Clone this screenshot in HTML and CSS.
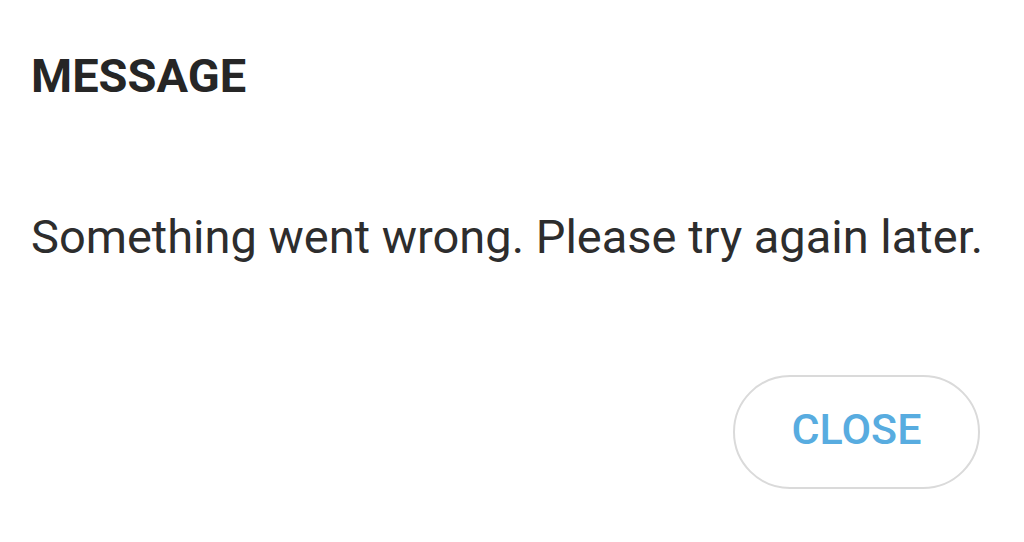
FILE: index.html
```html
<!DOCTYPE html>
<html>
<head>
<meta charset="utf-8">
<link rel="stylesheet" href="styles.css">
</head>
<body>
<div class="dialog">
  <h1 class="title">MESSAGE</h1>
  <p class="message">Something went wrong. Please try again later.</p>
  <div class="actions">
    <button class="close-btn">CLOSE</button>
  </div>
</div>
</body>
</html>
```
FILE: styles.css
```css
html, body {
  margin: 0;
  padding: 0;
  background: #ffffff;
}
body {
  width: 1024px;
  height: 542px;
  overflow: hidden;
  font-family: Roboto, "Noto Sans", sans-serif;
}
.dialog {
  padding: 0 44px 0 31px;
  display: flex;
  flex-direction: column;
}
.title {
  margin: 0;
  padding-top: 50px;
  font-size: 47px;
  font-weight: 700;
  line-height: 52px;
  color: #262626;
  letter-spacing: 0;
}
.message {
  margin: 0;
  padding-top: 109px;
  font-size: 47px;
  line-height: 52px;
  color: #2d2d2d;
  white-space: nowrap;
}
.actions {
  display: flex;
  justify-content: flex-end;
  padding-top: 112px;
}
.close-btn {
  width: 247px;
  height: 114px;
  border: 2px solid #dadada;
  border-radius: 57px;
  background: #fff;
  color: #58ace0;
  font-family: Roboto, "Noto Sans", sans-serif;
  font-size: 43px;
  font-weight: 500;
  padding: 0 0 7px 0;
}
```
